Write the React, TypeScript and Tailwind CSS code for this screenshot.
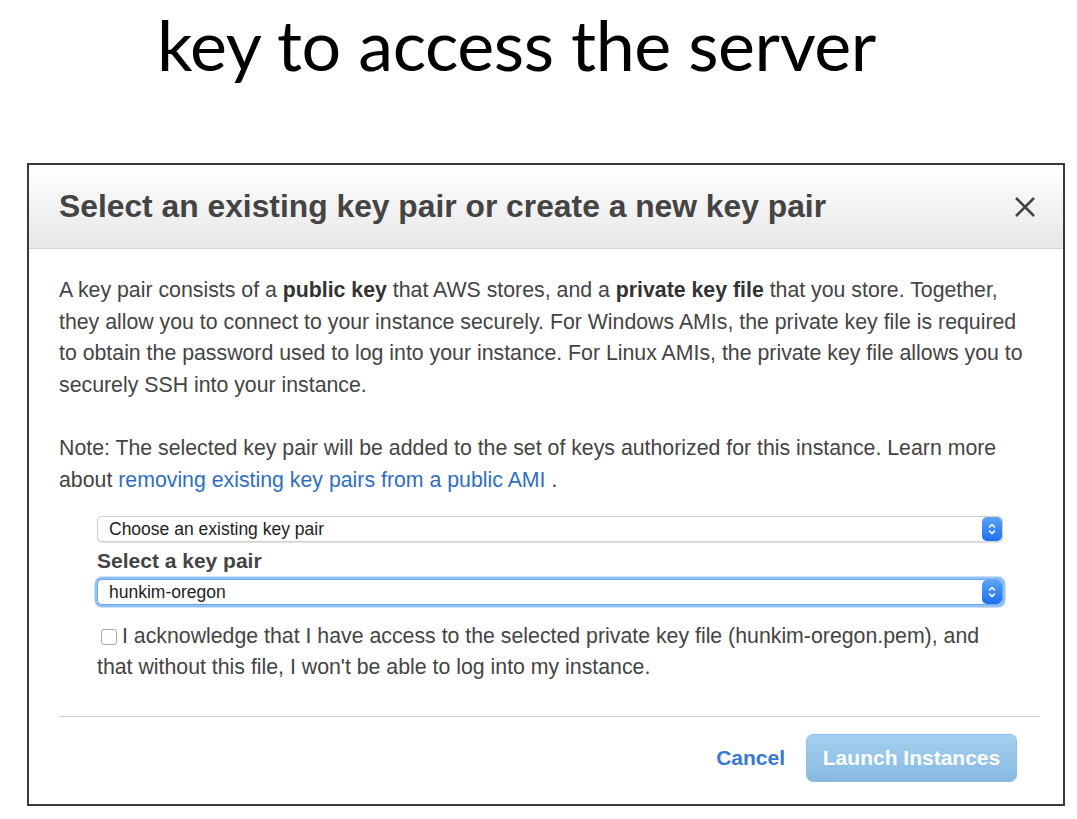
import React from "react";

function Stepper() {
  return (
    <div className="flex h-full w-[20px] items-center justify-center rounded-[5px] bg-gradient-to-b from-[#5aa2f8] to-[#1c6ff2]">
      <svg width="10" height="16" viewBox="0 0 10 16" fill="none">
        <path d="M2.5 6 L5 3.5 L7.5 6" stroke="white" strokeWidth="1.6" strokeLinecap="round" strokeLinejoin="round" />
        <path d="M2.5 10 L5 12.5 L7.5 10" stroke="white" strokeWidth="1.6" strokeLinecap="round" strokeLinejoin="round" />
      </svg>
    </div>
  );
}

export default function App() {
  return (
    <div className="relative h-[819px] w-[1077px] overflow-hidden bg-white">
      <div
        className="whitespace-nowrap pl-[157px] pt-[2px] text-[70px] leading-[84px] tracking-[-0.45px] text-black"
        style={{ fontFamily: "Lato, 'Open Sans', sans-serif" }}
      >
        key to access the server
      </div>

      <div
        className="ml-[27px] mt-[77px] flex h-[643px] w-[1038px] flex-col border-2 border-[#3a3a3a] bg-white text-[#444]"
        style={{ fontFamily: "'Liberation Sans', Arial, sans-serif" }}
      >
        <div className="flex h-[84px] items-center justify-between border-b border-[#d3d3d3] bg-gradient-to-b from-[#ffffff] to-[#e7e7e7] pl-[30px] pr-[27px]">
          <div className="whitespace-nowrap text-[31.8px] font-bold text-[#444]">
            Select an existing key pair or create a new key pair
          </div>
          <svg width="22" height="22" viewBox="0 0 22 22">
            <path d="M2 2 L20 20 M20 2 L2 20" stroke="#444" strokeWidth="2.6" strokeLinecap="butt" />
          </svg>
        </div>

        <div className="flex flex-1 flex-col pl-[30px] pr-[20px] pt-[26px]">
          <p className="whitespace-nowrap text-[21.3px] leading-[31.5px] text-[#444]">
            A key pair consists of a <b className="font-bold text-[#333]">public key</b> that AWS stores, and a{" "}
            <b className="font-bold text-[#333]">private key file</b> that you store. Together,
            <br />
            they allow you to connect to your instance securely. For Windows AMIs, the private key file is required
            <br />
            to obtain the password used to log into your instance. For Linux AMIs, the private key file allows you to
            <br />
            securely SSH into your instance.
          </p>
          <p className="mt-[32px] whitespace-nowrap text-[21.3px] leading-[31.5px] text-[#444]">
            Note: The selected key pair will be added to the set of keys authorized for this instance. Learn more
            <br />
            about <span className="text-[#2f6fbf]">removing existing key pairs from a public AMI</span> .
          </p>

          <div className="ml-[38px] mt-[20px] w-[906px]">
            <div className="flex h-[26px] items-center justify-between rounded-[5px] border border-[#cfcfcf] bg-white shadow-[0_1px_1px_rgba(0,0,0,0.12)]">
              <span className="pl-[11px] text-[17.5px] text-[#222]">Choose an existing key pair</span>
              <Stepper />
            </div>
            <div className="mt-[6px] text-[21px] font-bold leading-[26px] text-[#444]">Select a key pair</div>
            <div className="mt-[5px] flex h-[26px] items-center justify-between rounded-[5px] border border-[#6aa6ee] bg-white shadow-[0_0_0_2.5px_#93c0f5]">
              <span className="pl-[11px] text-[17.5px] text-[#222]">hunkim-oregon</span>
              <Stepper />
            </div>
            <p className="mt-[16px] whitespace-nowrap text-[21.3px] leading-[31px] text-[#444]">
              <span className="relative top-[2px] ml-[4px] mr-[5px] inline-block h-[16px] w-[16px] rounded-[3px] border border-[#a9a9a9] bg-white align-baseline" />
              I acknowledge that I have access to the selected private key file (hunkim-oregon.pem), and
              <br />
              that without this file, I won't be able to log into my instance.
            </p>
          </div>

          <div className="mr-[3px] mt-[33px] h-px bg-[#cdcdcd]" />

          <div className="mt-[17px] flex items-center justify-end gap-[21px] pr-[26px]">
            <span className="text-[21px] font-bold text-[#3a78d2]">Cancel</span>
            <div className="flex h-[48px] w-[211px] items-center justify-center rounded-[7px] border border-[#8cbde2] bg-gradient-to-b from-[#a3d0f0] to-[#87b9e0] text-[21px] font-bold text-white">
              Launch Instances
            </div>
          </div>
        </div>
      </div>
    </div>
  );
}
